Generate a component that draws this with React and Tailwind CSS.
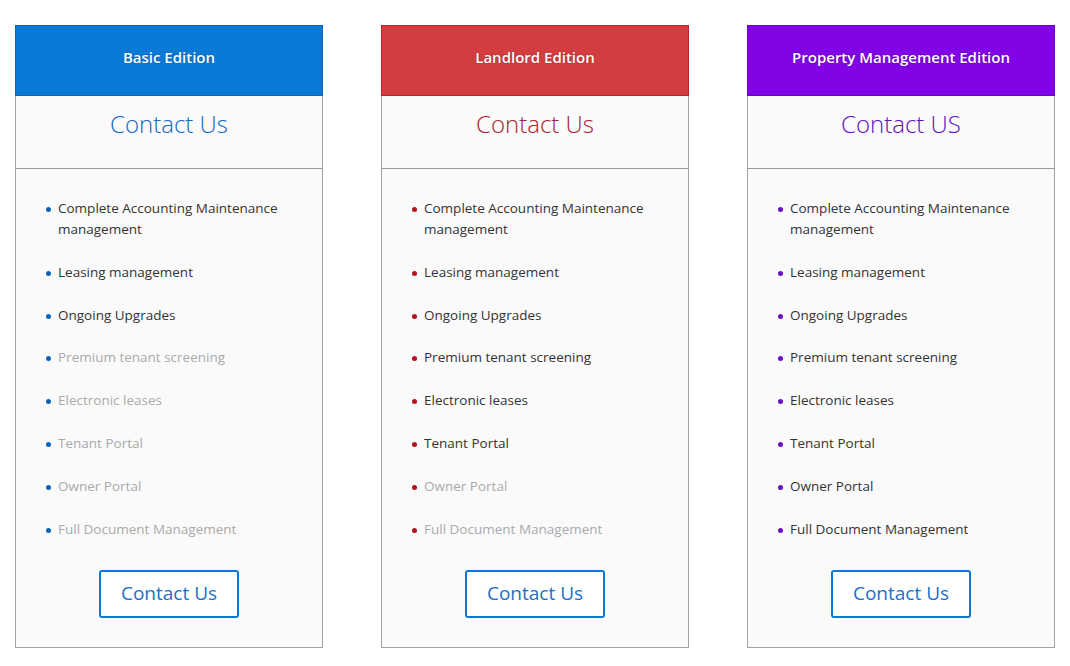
const plans = [
  {
    name: 'Basic Edition',
    price: 'Contact Us',
    head: 'bg-[#0b7ad6] border-[#0a64b8]',
    price_c: 'text-[#1769c0]',
    dot: 'bg-[#0b63b8]',
    on: 3,
  },
  {
    name: 'Landlord Edition',
    price: 'Contact Us',
    head: 'bg-[#d33d40] border-[#b3262c]',
    price_c: 'text-[#a8232e]',
    dot: 'bg-[#b3121c]',
    on: 6,
  },
  {
    name: 'Property Management Edition',
    price: 'Contact US',
    head: 'bg-[#8104e6] border-[#6c02c4]',
    price_c: 'text-[#6410c4]',
    dot: 'bg-[#6a0cc8]',
    on: 8,
  },
];

const features = [
  'Complete Accounting Maintenance management',
  'Leasing management',
  'Ongoing Upgrades',
  'Premium tenant screening',
  'Electronic leases',
  'Tenant Portal',
  'Owner Portal',
  'Full Document Management',
];

const PlanCard = ({ plan }) => (
  <div className="w-[308px] flex-shrink-0 bg-[#fafafa] border border-[#a3a3a3] border-t-0">
    <div className={`h-[71px] -mx-px border flex items-center justify-center pb-[6px] ${plan.head}`}>
      <h3 className="text-white text-[15px] font-semibold [text-shadow:0_0_2px_rgba(0,0,0,0.3)]">{plan.name}</h3>
    </div>
    <div className="h-[73px] border-b border-[#999] flex items-center justify-center pb-[16px]">
      <p className={`text-[24px] font-light ${plan.price_c}`}>{plan.price}</p>
    </div>
    <ul className="pt-[29px] pl-[30px] pr-4 flex flex-col gap-[21.8px]">
      {features.map((f, i) => (
        <li key={f} className="flex items-start gap-[7px]">
          <span className={`mt-[9px] w-[5px] h-[5px] rounded-full flex-shrink-0 ${plan.dot}`} />
          <span className={`text-[13.5px] leading-[21px] ${i < plan.on ? 'text-[#333]' : 'text-[#aaa]'}`}>{f}</span>
        </li>
      ))}
    </ul>
    <div className="flex justify-center pt-[30px] pb-[29px]">
      <button className="w-[140px] h-[48px] border-2 border-[#0b78d6] rounded-[3px] text-[19px] text-[#1a70c6] bg-white">
        Contact Us
      </button>
    </div>
  </div>
);

export default function App() {
  return (
    <div className="w-[1070px] h-[666px] bg-white pt-[25px] pl-[15px] flex gap-[58px] items-start" style={{ fontFamily: '"Open Sans", sans-serif' }}>
      {plans.map((p) => (
        <PlanCard key={p.name} plan={p} />
      ))}
    </div>
  );
}
